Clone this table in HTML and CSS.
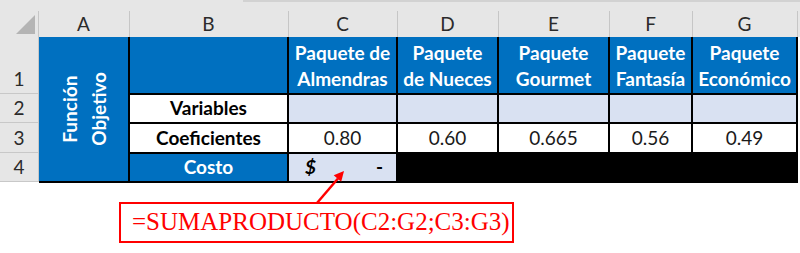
FILE: index.html
```html
<!DOCTYPE html>
<html lang="es">
<head>
<meta charset="utf-8">
<title>Función Objetivo</title>
<link rel="stylesheet" href="styles.css">
</head>
<body>
<div class="page">
  <div class="topline"></div>
  <div class="colhead">
    <div class="corner"><svg width="38" height="35" viewBox="0 0 38 35"><polygon points="35,13 35,32 16,32" fill="#b4b4b4"/></svg></div>
    <div class="ch ch-a">A</div>
    <div class="ch ch-b">B</div>
    <div class="ch ch-c">C</div>
    <div class="ch ch-d">D</div>
    <div class="ch ch-e">E</div>
    <div class="ch ch-f">F</div>
    <div class="ch ch-g">G</div>
    <div class="ch ch-rest"></div>
  </div>
  <div class="body">
    <div class="rownums">
      <div class="rn rn1">1</div>
      <div class="rn rn2">2</div>
      <div class="rn rn3">3</div>
      <div class="rn rn4">4</div>
    </div>
    <div class="grid">
      <div class="cell cell-a"><span class="vert">Función<br>Objetivo</span></div>
      <div class="cell blue"></div>
      <div class="cell blue head">Paquete de<br>Almendras</div>
      <div class="cell blue head">Paquete<br>de Nueces</div>
      <div class="cell blue head">Paquete<br>Gourmet</div>
      <div class="cell blue head">Paquete<br>Fantasía</div>
      <div class="cell blue head">Paquete<br>Económico</div>

      <div class="cell white label">Variables</div>
      <div class="cell light"></div>
      <div class="cell light"></div>
      <div class="cell light"></div>
      <div class="cell light"></div>
      <div class="cell light"></div>

      <div class="cell white label">Coeficientes</div>
      <div class="cell white num">0.80</div>
      <div class="cell white num">0.60</div>
      <div class="cell white num">0.665</div>
      <div class="cell white num">0.56</div>
      <div class="cell white num">0.49</div>

      <div class="cell blue label-w">Costo</div>
      <div class="cell light money"><span class="dollar">$</span><span class="dash">-</span></div>
      <div class="cell black"></div>
    </div>
  </div>
  <div class="formula">=SUMAPRODUCTO(C2:G2;C3:G3)</div>
  <svg class="arrow" width="800" height="253" viewBox="0 0 800 253">
    <line x1="317" y1="203" x2="338" y2="178.5" stroke="#ff0000" stroke-width="2.5"/>
    <polygon points="344,171 341.2,181.8 333.7,175.3" fill="#ff0000"/>
  </svg>
</div>
</body>
</html>
```

FILE: styles.css
```css
html, body {
  margin: 0;
  padding: 0;
  background: #ffffff;
}

.page {
  position: relative;
  width: 800px;
  height: 253px;
  overflow: hidden;
  font-family: Lato, "Noto Sans", sans-serif;
}

.topline {
  height: 2px;
  background: linear-gradient(to right, #e6e6e6 243px, #d2d2d2 243px);
}

.colhead {
  display: flex;
  height: 35px;
  background: #e6e6e6;
}

.corner {
  width: 38px;
  flex: none;
}

.corner svg {
  display: block;
}

.ch {
  flex: none;
  box-sizing: border-box;
  height: 35px;
  text-align: center;
  font-size: 19px;
  line-height: 20px;
  padding-top: 12px;
  color: #2b2b2b;
  background: linear-gradient(#c6c6c6, #c6c6c6) left 9px / 1px 100% no-repeat;
}

.ch-a { width: 91px; }
.ch-b { width: 159px; }
.ch-c { width: 109px; }
.ch-d { width: 101px; }
.ch-e { width: 111px; }
.ch-f { width: 83px; }
.ch-g { width: 105px; }
.ch-rest { width: 3px; }

.body {
  display: flex;
  align-items: flex-start;
}

.rownums {
  width: 39px;
  box-sizing: border-box;
  border-right: 1px solid #c8c8c8;
  background: #e6e6e6;
  display: flex;
  flex-direction: column;
}

.rn {
  box-sizing: border-box;
  border-bottom: 1px solid #c8c8c8;
  display: flex;
  align-items: flex-end;
  justify-content: center;
  font-size: 19px;
  line-height: 22px;
  color: #2b2b2b;
  padding-bottom: 3px;
}

.rn1 { height: 57px; }
.rn2 { height: 29px; }
.rn3 { height: 30px; }
.rn4 { height: 29px; }

.grid {
  display: grid;
  grid-template-columns: 89px 157px 107px 99px 109px 81px 103px;
  grid-template-rows: 56px 27px 28px 27px;
  column-gap: 2px;
  row-gap: 2px;
  padding: 0 2px 2px 0;
  background: #000000;
}

.cell {
  display: flex;
  align-items: flex-end;
  justify-content: center;
  font-size: 19px;
  line-height: 22px;
  padding-bottom: 3px;
  box-sizing: border-box;
  text-align: center;
}

.blue { background: #0070c0; color: #ffffff; }
.white { background: #ffffff; color: #1a1a1a; }
.light { background: #d9e1f2; }
.black { background: #000000; grid-column: span 4; }

.cell-a {
  grid-row: 1 / 5;
  background: #0070c0;
  color: #ffffff;
  align-items: center;
  padding-bottom: 0;
}

.vert {
  writing-mode: vertical-rl;
  transform: rotate(180deg);
  font-weight: 700;
  font-size: 19px;
  line-height: 29px;
  text-align: center;
}

.head {
  font-weight: 700;
  line-height: 26px;
  padding-bottom: 1px;
}

.label {
  font-weight: 700;
  color: #000000;
}

.label-w {
  font-weight: 700;
}

.num {
  font-weight: 400;
}

.money {
  justify-content: space-between;
  padding: 0 13px 3px 16px;
  color: #000000;
}

.dollar {
  font-weight: 700;
  font-style: italic;
}

.dash {
  font-weight: 700;
}

.formula {
  box-sizing: border-box;
  margin: 19px 0 0 119px;
  width: 395px;
  height: 41px;
  border: 2px solid #ff0000;
  padding-left: 11px;
  font-family: "Liberation Serif", "Times New Roman", serif;
  font-size: 25px;
  line-height: 36px;
  color: #ff0000;
  white-space: nowrap;
}

.arrow {
  position: absolute;
  left: 0;
  top: 0;
  pointer-events: none;
}
```
